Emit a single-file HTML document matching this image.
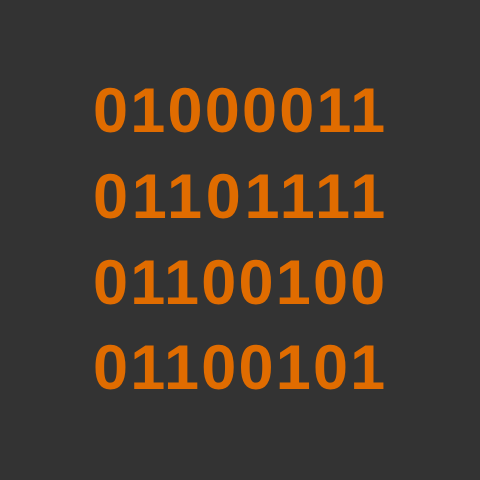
<!DOCTYPE html>
<html><head><style>
html,body{margin:0;padding:0;width:480px;height:480px;background:#333333;overflow:hidden}
.l{position:absolute;left:93px;font-family:"Liberation Sans",sans-serif;font-weight:bold;font-size:63px;line-height:63px;color:#e06c00;letter-spacing:2.2px}
</style></head><body>
<div class="l" style="top:80px">01000011</div>
<div class="l" style="top:166px;letter-spacing:3.7px">01101111</div>
<div class="l" style="top:252px">01100100</div>
<div class="l" style="top:337px">01100101</div>
</body></html>
